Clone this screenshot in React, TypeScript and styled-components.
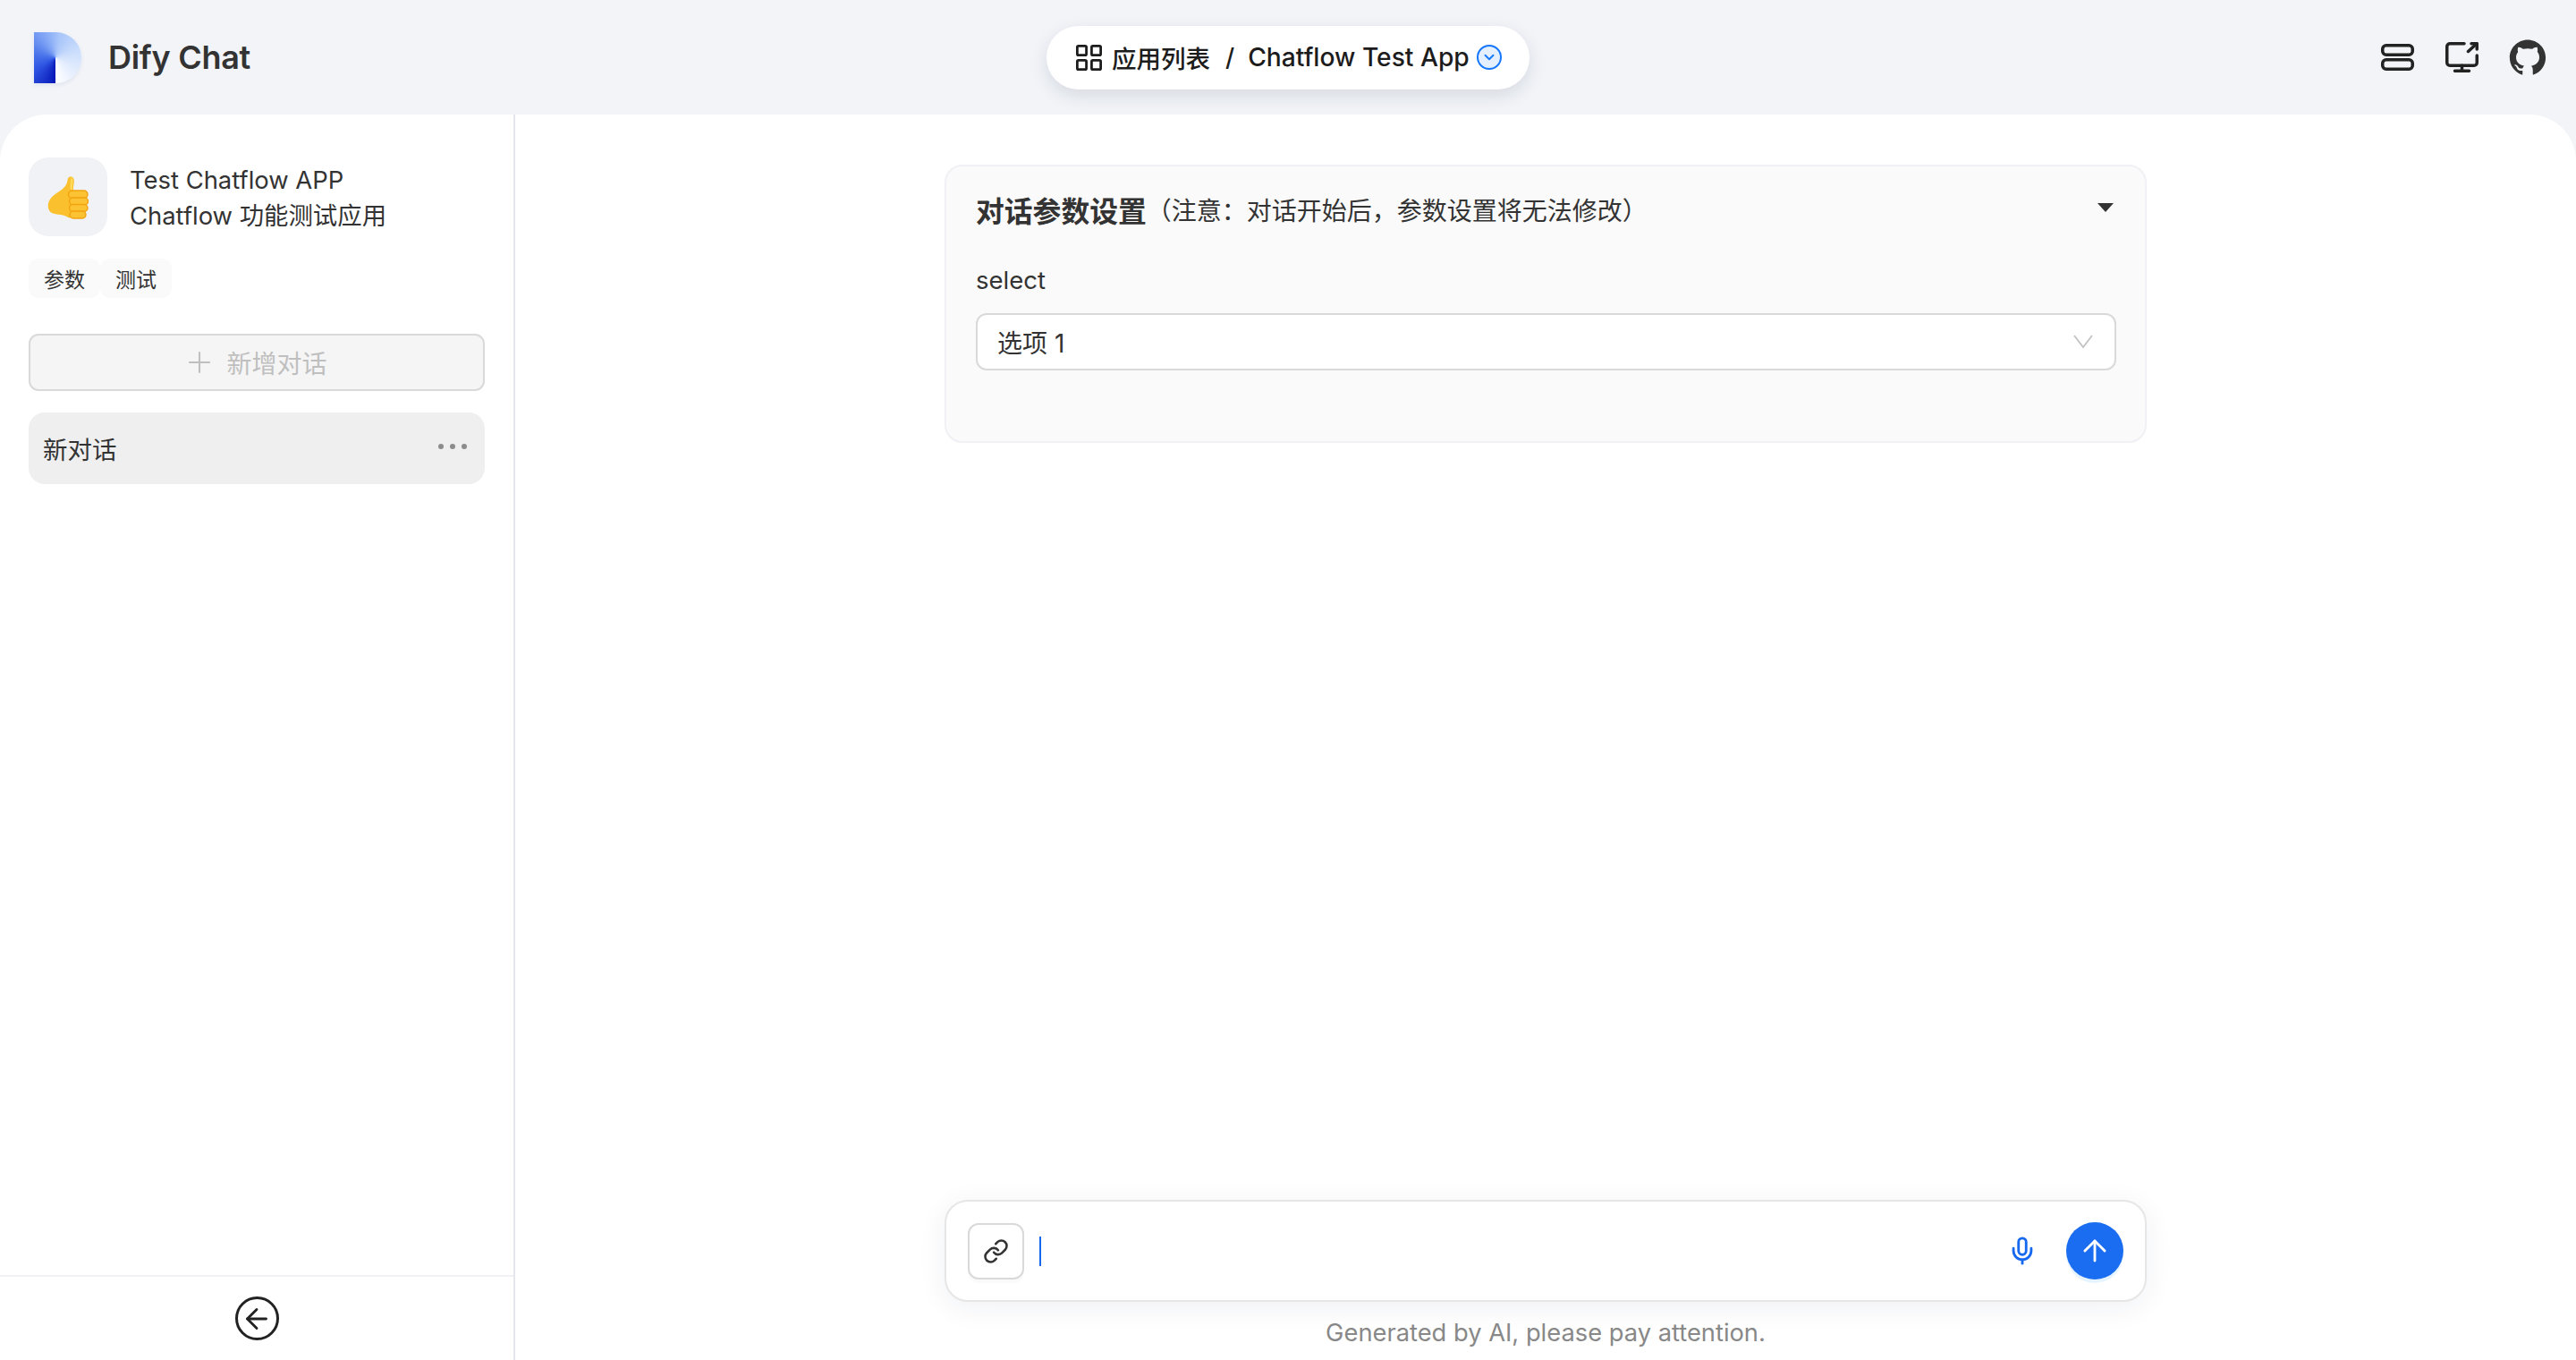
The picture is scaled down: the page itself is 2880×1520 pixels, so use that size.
import React from 'react';
import styled, { createGlobalStyle } from 'styled-components';
import { AiFillGithub } from 'react-icons/ai';
import { ArrowLeft, ArrowUp, ChevronDown, LayoutGrid, Link, Mic, Plus } from 'lucide-react';

const GlobalStyle = createGlobalStyle`
  html, body {
    margin: 0;
    padding: 0;
    background: #f2f4f8;
  }
  * {
    box-sizing: border-box;
  }
  body {
    font-family: Inter, "Noto Sans CJK SC", sans-serif;
    color: #333;
  }
`;

const Page = styled.div`
  width: 2880px;
  height: 1520px;
  display: flex;
  flex-direction: column;
  overflow: hidden;
  background: #f2f4f8;
`;

const Header = styled.header`
  height: 128px;
  flex: none;
  display: grid;
  grid-template-columns: 1fr auto 1fr;
  align-items: center;
`;

const Brand = styled.div`
  display: flex;
  align-items: center;
  padding-left: 38px;
  gap: 30px;
`;

const Logo = styled.div`
  width: 53px;
  height: 57px;
  border-radius: 0 29px 29px 0;
  background: conic-gradient(
    from 180deg at 46% 50%,
    #0616b6 0deg,
    #2f55e3 60deg,
    #4a74ea 100deg,
    #7fa4f5 150deg,
    #a9c6fa 190deg,
    #cfe0fc 260deg,
    #eaf1fe 320deg,
    #ffffff 360deg
  );
  box-shadow: 0 2px 4px rgba(90, 110, 170, 0.12);
`;

const BrandName = styled.div`
  font-size: 36px;
  font-weight: 600;
  color: #333;
  letter-spacing: -0.3px;
`;

const Crumbs = styled.nav`
  height: 71px;
  width: 540px;
  padding: 0 32px 0 30px;
  display: flex;
  align-items: center;
  border-radius: 36px;
  background: #fff;
  box-shadow: 0 7px 20px rgba(20, 30, 60, 0.12);
  color: #1c1c1c;
  font-size: 27.5px;
  font-weight: 500;
  white-space: nowrap;

  & > svg {
    flex: none;
  }
`;

const CrumbLabel = styled.span`
  margin-left: 8px;
`;

const CrumbSlash = styled.span`
  margin: 0 15px 0 17px;
`;

const CurrentApp = styled.span`
  font-size: 28.2px;
  margin-right: 8px;
`;

const ChevronBadge = styled.span`
  width: 28px;
  height: 28px;
  flex: none;
  display: flex;
  align-items: center;
  justify-content: center;
  border-radius: 50%;
  border: 2.5px solid #1677ff;
  background: #e4f0ff;
  color: #1677ff;
`;

const HeaderActions = styled.div`
  display: flex;
  align-items: center;
  justify-content: flex-end;
  gap: 35px;
  padding-right: 31px;
  color: #222;
`;

const GithubLink = styled.a`
  display: flex;
  margin-left: -3px;
  color: #333;
`;

const Body = styled.div`
  flex: 1;
  min-height: 0;
  display: flex;
  background: #fff;
  border-radius: 52px 52px 0 0;
`;

const Sidebar = styled.aside`
  width: 576px;
  flex: none;
  display: flex;
  flex-direction: column;
  border-right: 2px solid #e5e6eb;
`;

const SideContent = styled.div`
  flex: 1;
  padding: 48px 32px 0 32px;
`;

const AppInfo = styled.div`
  display: flex;
  align-items: center;
  gap: 25px;
`;

const AppAvatar = styled.div`
  width: 88px;
  height: 88px;
  flex: none;
  display: flex;
  align-items: center;
  justify-content: center;
  border-radius: 22px;
  background: #f0f2f6;
`;

const AppText = styled.div`
  font-size: 27.4px;
  line-height: 40px;
  padding-top: 2px;
  color: #333;
`;

const Tags = styled.div`
  display: flex;
  margin-top: 25px;
`;

const Tag = styled.span`
  width: 80px;
  height: 44px;
  display: flex;
  align-items: center;
  justify-content: center;
  border-radius: 11px;
  background: #fafafa;
  font-size: 23px;
  color: #333;
`;

const NewChatButton = styled.div`
  height: 64px;
  margin-top: 40px;
  padding-right: 4px;
  display: flex;
  align-items: center;
  justify-content: center;
  gap: 11px;
  border: 2px solid #d9d9d9;
  border-radius: 11px;
  background: #f5f5f5;
  color: #bfbfbf;
  font-size: 28px;
`;

const ChatItem = styled.div`
  height: 80px;
  margin-top: 24px;
  padding: 0 20px 0 16px;
  display: flex;
  align-items: center;
  justify-content: space-between;
  border-radius: 18px;
  background: #efefef;
  font-size: 27.5px;
  color: #333;
`;

const MoreDots = styled.span`
  display: flex;
  gap: 7px;
  margin-bottom: 5px;
`;

const Dot = styled.i`
  width: 6px;
  height: 6px;
  border-radius: 50%;
  background: #8c8c8c;
`;

const SideFooter = styled.div`
  height: 95px;
  flex: none;
  display: flex;
  align-items: center;
  justify-content: center;
  border-top: 2px solid #f0f0f5;
`;

const BackCircle = styled.span`
  width: 49px;
  height: 49px;
  display: flex;
  align-items: center;
  justify-content: center;
  border-radius: 50%;
  border: 3px solid #222;
  color: #222;
`;

const Main = styled.main`
  flex: 1;
  min-width: 0;
  display: flex;
  flex-direction: column;
  align-items: center;
`;

const ParamsCard = styled.section`
  width: 1344px;
  height: 311px;
  margin-top: 56px;
  padding: 0 32px 0 33px;
  border: 2px solid #f0f0f5;
  border-radius: 20px;
  background: #fafafa;
`;

const CardHeader = styled.div`
  height: 96px;
  display: flex;
  align-items: center;
  justify-content: space-between;
`;

const CardTitle = styled.div`
  display: flex;
  align-items: center;
`;

const TitleStrong = styled.span`
  font-size: 31.8px;
  font-weight: 600;
  color: #333;
`;

const TitleNote = styled.span`
  font-size: 28px;
  color: #333;
`;

const Triangle = styled.i`
  width: 0;
  height: 0;
  margin-right: 3px;
  margin-bottom: 4px;
  border-left: 9px solid transparent;
  border-right: 9px solid transparent;
  border-top: 10px solid #333;
`;

const FieldLabel = styled.div`
  margin-top: 11px;
  font-size: 27.5px;
  line-height: 40px;
  color: #333;
`;

const SelectBox = styled.div`
  height: 64px;
  margin-top: 17px;
  padding: 0 24px 0 22px;
  display: flex;
  align-items: center;
  justify-content: space-between;
  border: 2px solid #d9d9d9;
  border-radius: 12px;
  background: #fff;
  font-size: 28px;
  color: #333;
`;

const SelectArrow = styled.span`
  display: flex;
  color: #c2c2c2;
`;

const Composer = styled.div`
  width: 1344px;
  height: 114px;
  margin-top: auto;
  padding: 0 24px;
  flex: none;
  display: flex;
  align-items: center;
  border: 2px solid #e6e6e6;
  border-radius: 26px;
  background: #fff;
  box-shadow: 0 6px 32px rgba(30, 40, 80, 0.07);
`;

const AttachButton = styled.span`
  width: 63px;
  height: 63px;
  flex: none;
  display: flex;
  align-items: center;
  justify-content: center;
  border: 2px solid #d9d9d9;
  border-radius: 12px;
  background: #fff;
  box-shadow: 0 4px 0 rgba(0, 0, 0, 0.02);
  color: #333;
`;

const Caret = styled.i`
  width: 2px;
  height: 33px;
  margin-left: 17px;
  background: #1668ee;
`;

const MicButton = styled.span`
  margin-left: auto;
  margin-right: 32px;
  display: flex;
  color: #1668ee;
`;

const SendButton = styled.span`
  width: 64px;
  height: 64px;
  flex: none;
  display: flex;
  align-items: center;
  justify-content: center;
  border-radius: 50%;
  background: #1a6cf0;
  box-shadow: 0 4px 0 #e6f4ff;
  color: #fff;
`;

const Disclaimer = styled.div`
  height: 65px;
  flex: none;
  padding-top: 17px;
  font-size: 27.3px;
  line-height: 36px;
  color: #888;
`;

const RowsIcon = () => (
    <svg width="37" height="30" viewBox="0 0 37 30" fill="none" stroke="currentColor" strokeWidth="3.5">
        <rect x="1.75" y="1.75" width="33.5" height="10.5" rx="4" />
        <rect x="1.75" y="17.75" width="33.5" height="10.5" rx="4" />
    </svg>
);

const ScreenShareIcon = () => (
    <svg
        width="37"
        height="34"
        viewBox="0 0 37 34"
        fill="none"
        stroke="currentColor"
        strokeWidth="3.5"
        strokeLinecap="round"
        strokeLinejoin="round"
    >
        <path d="M21 1.75H5A3.25 3.25 0 0 0 1.75 5v18A3.25 3.25 0 0 0 5 26.25h27A3.25 3.25 0 0 0 35.25 23v-8" />
        <path d="M25.5 10.5L35 1.75" />
        <path d="M29 1.75h6.25V8" />
        <path d="M18.5 26.25v6M10.5 32.25h16" />
    </svg>
);

const SelectChevron = () => (
    <svg width="22" height="16" viewBox="0 0 22 16" fill="none" stroke="currentColor" strokeWidth="1.800">
        <path d="M1 1l10 13L21 1" />
    </svg>
);

const ThumbIcon = () => (
    <svg width="46" height="49" viewBox="0 0 46 49">
        <path
            d="M25 1.5c3.5-.6 5.3 2.2 4.8 6-.4 3.3-1.2 6.6-.8 10.2L34 20c1 9 1.500 17-.5 26l-9.500 1.500c-3-1.800-5.500-3.200-9-3.500C7 43.500 1 42 .8 34.500.7 29.500 3 25.500 7.500 22c6-4.500 12.500-7.500 14.500-14 .8-2.700.5-5.700 3-6.500z"
            fill="#fbc02d"
        />
        <path d="M26 3c2-.3 3 1.500 2.600 4.500-.4 3-1 6-.6 9l-2.500-1c-.5-4 .5-8.500.5-12.500z" fill="#ffd95a" />
        <g fill="#fbc333" stroke="#f2a20f" strokeWidth="1.400">
            <rect x="23.500" y="17" width="21.500" height="8.500" rx="4.200" />
            <rect x="24.500" y="25" width="21" height="8" rx="4" />
            <rect x="24.500" y="32.500" width="20.500" height="8" rx="4" />
            <rect x="25" y="40" width="18" height="8" rx="4" />
        </g>
    </svg>
);

const App = () => {
    return (
        <Page>
            <GlobalStyle />
            <Header>
                <Brand>
                    <Logo />
                    <BrandName>Dify Chat</BrandName>
                </Brand>
                <Crumbs>
                    <LayoutGrid size={35} strokeWidth={1.900} />
                    <CrumbLabel>应用列表</CrumbLabel>
                    <CrumbSlash>/</CrumbSlash>
                    <CurrentApp>Chatflow Test App</CurrentApp>
                    <ChevronBadge>
                        <ChevronDown size={18} strokeWidth={2.5} />
                    </ChevronBadge>
                </Crumbs>
                <HeaderActions>
                    <RowsIcon />
                    <ScreenShareIcon />
                    <GithubLink>
                        <AiFillGithub size={46} />
                    </GithubLink>
                </HeaderActions>
            </Header>
            <Body>
                <Sidebar>
                    <SideContent>
                        <AppInfo>
                            <AppAvatar>
                                <ThumbIcon />
                            </AppAvatar>
                            <AppText>
                                <div>Test Chatflow APP</div>
                                <div>Chatflow 功能测试应用</div>
                            </AppText>
                        </AppInfo>
                        <Tags>
                            <Tag>参数</Tag>
                            <Tag>测试</Tag>
                        </Tags>
                        <NewChatButton>
                            <Plus size={38} strokeWidth={1.3} />
                            新增对话
                        </NewChatButton>
                        <ChatItem>
                            新对话
                            <MoreDots>
                                <Dot />
                                <Dot />
                                <Dot />
                            </MoreDots>
                        </ChatItem>
                    </SideContent>
                    <SideFooter>
                        <BackCircle>
                            <ArrowLeft size={36} strokeWidth={1.9} />
                        </BackCircle>
                    </SideFooter>
                </Sidebar>
                <Main>
                    <ParamsCard>
                        <CardHeader>
                            <CardTitle>
                                <TitleStrong>对话参数设置</TitleStrong>
                                <TitleNote>（注意：对话开始后，参数设置将无法修改）</TitleNote>
                            </CardTitle>
                            <Triangle />
                        </CardHeader>
                        <FieldLabel>select</FieldLabel>
                        <SelectBox>
                            选项 1
                            <SelectArrow>
                                <SelectChevron />
                            </SelectArrow>
                        </SelectBox>
                    </ParamsCard>
                    <Composer>
                        <AttachButton>
                            <Link size={29} strokeWidth={2.1} />
                        </AttachButton>
                        <Caret />
                        <MicButton>
                            <Mic size={34} strokeWidth={2} />
                        </MicButton>
                        <SendButton>
                            <ArrowUp size={38} strokeWidth={1.8} />
                        </SendButton>
                    </Composer>
                    <Disclaimer>Generated by AI, please pay attention.</Disclaimer>
                </Main>
            </Body>
        </Page>
    );
};

export default App;
